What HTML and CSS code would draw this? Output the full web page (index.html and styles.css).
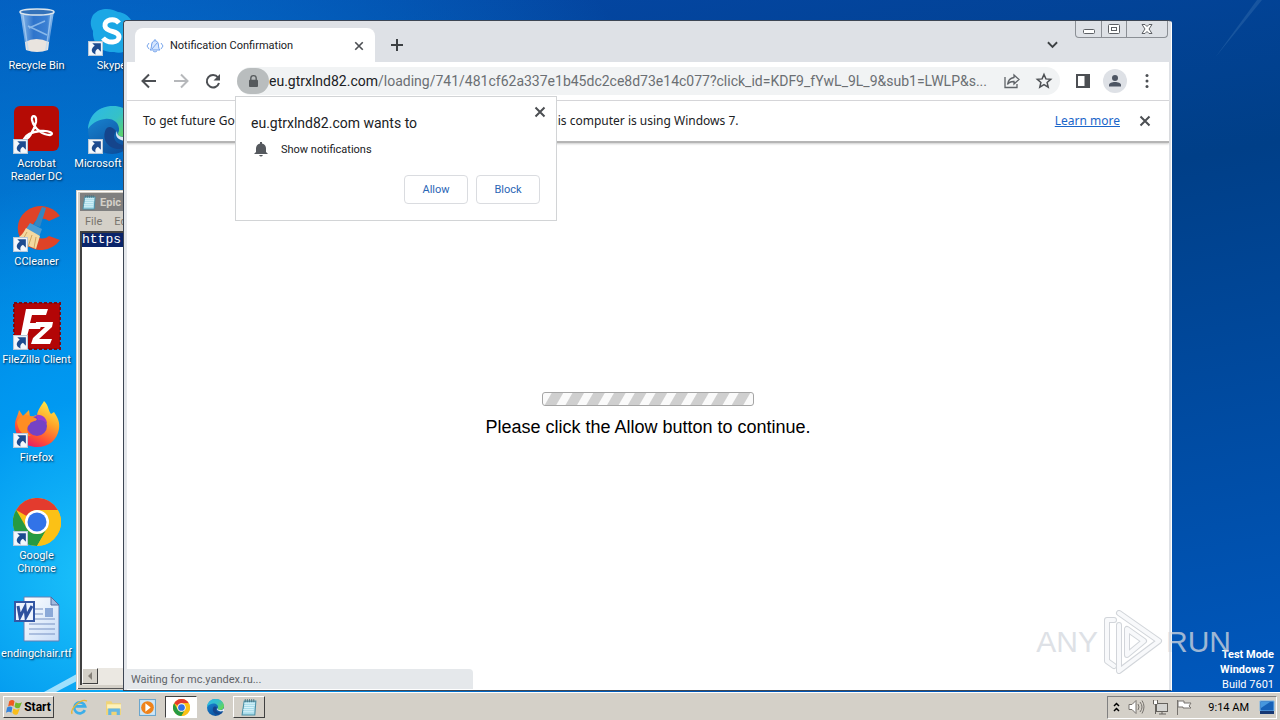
FILE: index.html
```html
<!DOCTYPE html>
<html lang="en">
<head>
<meta charset="utf-8">
<title>Desktop</title>
<link rel="stylesheet" href="styles.css">
</head>
<body>
<svg class="defs" aria-hidden="true">
  <defs>
    <linearGradient id="edgeA" x1="0" y1="0" x2="1" y2="0.6"><stop offset="0" stop-color="#2bb8ea"/><stop offset="0.6" stop-color="#35c1c8"/><stop offset="1" stop-color="#62d65c"/></linearGradient>
    <linearGradient id="edgeB" x1="0" y1="0" x2="0.6" y2="1"><stop offset="0" stop-color="#1b8fdc"/><stop offset="1" stop-color="#0c4f9c"/></linearGradient>
    <linearGradient id="fox" x1="0.8" y1="0" x2="0.3" y2="1"><stop offset="0" stop-color="#fff04a"/><stop offset="0.4" stop-color="#ffa52a"/><stop offset="0.75" stop-color="#ff4f35"/><stop offset="1" stop-color="#e3196b"/></linearGradient>
    <linearGradient id="bin" x1="0" y1="0" x2="1" y2="0"><stop offset="0" stop-color="#a9cdf2"/><stop offset="0.4" stop-color="#3777cc"/><stop offset="0.8" stop-color="#4585d6"/><stop offset="1" stop-color="#b5d8f7"/></linearGradient>
    <linearGradient id="paper" x1="0" y1="0" x2="1" y2="1"><stop offset="0" stop-color="#fff"/><stop offset="1" stop-color="#c7dcf7"/></linearGradient>
    <symbol id="shortcut" viewBox="0 0 14 14"><rect x=".5" y=".5" width="13" height="13" fill="#f4f8fc" stroke="#b8c8d8"/><path d="M4 2h8v8L9.300 7.300C7 8.500 6.500 10 7 12.500 2.500 11 2.500 7 6.300 4.500z" fill="#1d4b8f"/></symbol>
    <symbol id="chrome" viewBox="0 0 48 48"><circle cx="24" cy="24" r="24" fill="#fbc116"/><path d="M3.200 12A24 24 0 0 1 44.800 12H24A12 12 0 0 0 13.600 18z" fill="#e33b2e"/><path d="M3.200 12L13.600 30A12 12 0 0 0 24 36 12 12 0 0 0 34.400 30L24 48A24 24 0 0 1 3.200 12z" fill="#269a42"/><path d="M24 12h20.800A24 24 0 0 1 24 48l10.400-18A12 12 0 0 0 24 12z" fill="#fbc116"/><circle cx="24" cy="24" r="12" fill="#fff"/><circle cx="24" cy="24" r="9.500" fill="#3273e8"/></symbol>
    <symbol id="edge" viewBox="0 0 48 48"><circle cx="24" cy="24" r="24" fill="url(#edgeB)"/><path d="M0 23C1 9 11 0 25 0c14 0 23 10 23 20 0 7-5 11-11 11-7 0-8-3-6-6 1-8-6-13-14-12C9 14 3 18 0 23z" fill="url(#edgeA)"/><path d="M18 23c-5 10 2 20 13 20 6 0 11-3 14-6-6 3-15 3-18-3-2-3-1-6 1-9-4-5-8-5-10-2z" fill="#15458c"/><path d="M29 25c-3 5 1 9 8 10l11-1v-8c-3 4-7 5-11 5-6 0-8-2-8-6z" fill="#fff" opacity=".85"/></symbol>
    <symbol id="notepad" viewBox="0 0 16 16"><path d="M3 2h11l-1 13H1z" fill="#a8dcea" stroke="#4a8fa6"/><path d="M3 4h10M3 6h10M3 8h9M2 10h10M2 12h10" stroke="#e9fbff" stroke-width=".7"/><path d="M4 0v3M6 0v3M8 0v3M10 0v3M12 0v3" stroke="#48717f" stroke-width=".8"/></symbol>
    <symbol id="cross" viewBox="0 0 12 12"><path d="M1.500 1.500l9 9m0-9l-9 9" stroke="currentColor" stroke-width="2"/></symbol>
  </defs>
</svg>
<main class="desktop">
  <svg class="beams" viewBox="0 0 1280 720" preserveAspectRatio="none" aria-hidden="true">
    <path d="M44 720L100 688v8L56 720z" fill="#c4efff" opacity=".8"/>
    <path d="M1215 60L1262 0h-5z" fill="#4d82ba" opacity=".3"/>
  </svg>
  <nav class="icons">
    <a class="icon" href="#bin"><span class="pic"><svg viewBox="0 0 48 48"><path d="M7 3h34l-6 39q-11 4-22 0z" fill="url(#bin)" opacity=".85"/><path d="M12 34q11-6 24 0l-1 8q-11 4-22 0z" fill="#e9e4df"/><path d="M10 7l5 35M38 7l-5 35M16 20l16-7M15 18l19 9" stroke="#b4d8f8" stroke-width="1.500" opacity=".65"/><ellipse cx="24" cy="4" rx="17" ry="3" fill="#3472b9" stroke="#dce6ed" stroke-width="1.500"/></svg></span>Recycle Bin</a>
    <a class="icon" href="#acrobat"><span class="pic"><svg viewBox="0 0 48 48"><rect x="1" width="45" height="45" rx="6" fill="#b50b05"/><path d="M11 33c3 3 10-8 12-17 1-7-5-8-4-2 2 9 11 15 18 15 5-1 0-5-10-4-8 1-14 4-16 8z" fill="none" stroke="#fff" stroke-width="2.300"/></svg><svg class="arrow"><use href="#shortcut"/></svg></span>Acrobat Reader DC</a>
    <a class="icon" href="#ccleaner"><span class="pic"><svg viewBox="0 0 48 48"><path d="M47 12A23 22 0 1 0 47 36l-11-4a10 10 0 1 1 0-15z" fill="#df4327"/><path d="M29 3l4 1-6 19-6-2z" fill="#3487c3"/><path d="M17 19l12 6-3 8-13-8z" fill="#4a9cd4"/><path d="M13 24l14 8-4 13-22-9c6-3 9-6 12-12z" fill="#f4d9a0"/><path d="M14 28l-6 11M19 31l-4 12M23 33l-2 11" stroke="#cda562"/></svg><svg class="arrow"><use href="#shortcut"/></svg></span>CCleaner</a>
    <a class="icon" href="#filezilla"><span class="pic"><svg viewBox="0 0 48 48"><rect x="1" y="1" width="46" height="46" fill="#b30506" stroke="#7e0910" stroke-width="2" stroke-dasharray="3 2"/><path d="M13 7h22l-2 6H19l-2 8h12l-2 6H16l-4 15H6zM23 20h17l-1 5-13 12h13l-2 5H18l2-6 12-11H22z" fill="#fff"/></svg><svg class="arrow"><use href="#shortcut"/></svg></span>FileZilla Client</a>
    <a class="icon" href="#firefox"><span class="pic"><svg viewBox="0 0 48 48"><path d="M6 10l4 6 6-6 1 7 7-2C25 9 29 5 31 1c5 5 4 9 7 13l3-2c4 6 6 10 5 17C44 40 36 47 24 47S2 38 2 25C2 19 5 16 6 10z" fill="url(#fox)"/><circle cx="24" cy="26" r="10" fill="#7542c5"/><path d="M4 22c3-9 12-8 20-3-1 3-7 2-7 5-4 3-4 9 1 12C9 36 5 30 4 22z" fill="#ff8d22"/><path d="M23 15c6-1 11 3 11 9-3-4-5-4-9-4z" fill="#9a3dcc"/></svg><svg class="arrow"><use href="#shortcut"/></svg></span>Firefox</a>
    <a class="icon" href="#chrome-app"><span class="pic"><svg><use href="#chrome"/></svg><svg class="arrow"><use href="#shortcut"/></svg></span>Google Chrome</a>
    <a class="icon" href="#document"><span class="pic"><svg viewBox="0 0 48 48"><path d="M11 1h27l8 8v36H11z" fill="url(#paper)" stroke="#6680b4"/><path d="M38 1v8h8z" fill="#a1b9dd" stroke="#526c9f"/><path d="M16 13h14M16 18h14M16 23h26M16 28h26M16 33h26M16 38h26" stroke="#7791c3"/><rect x="32" y="12" width="8" height="9" fill="#8ba9d8"/><rect x="2" y="6" width="19" height="19" fill="#edf3ff" stroke="#3457a4" stroke-width="2"/><path d="M5 10l2 11 5-10 1 10 6-11" fill="none" stroke="#2d509e" stroke-width="3"/></svg></span>endingchair.rtf</a>
    <a class="icon" href="#skype"><span class="pic"><svg viewBox="0 0 48 48"><path d="M5 7C13-2 25 1 30 4c12 1 19 14 15 24 1 12-9 19-19 16C12 45 4 34 5 23 2 18 2 12 5 7z" fill="#1ba7e5"/><path d="M31 15C26 9 16 12 17 18c1 7 14 4 14 11 0 6-11 7-16 1" fill="none" stroke="#fff" stroke-width="5"/></svg><svg class="arrow"><use href="#shortcut"/></svg></span>Skype</a>
    <a class="icon" href="#edge-app"><span class="pic"><svg><use href="#edge"/></svg><svg class="arrow"><use href="#shortcut"/></svg></span>Microsoft Edge</a>
  </nav>

  <section class="notepad" aria-label="Notepad">
    <header class="np-title"><svg><use href="#notepad"/></svg>Epic</header>
    <div class="np-menu"><span>File</span><span>Edit</span></div>
    <div class="np-body"><span class="selected">https</span></div>
    <div class="np-scroll"><button type="button" aria-label="Scroll left"><svg viewBox="0 0 8 8"><path d="M6 0v8L2 4z" fill="#858078"/></svg></button></div>
  </section>

  <section class="browser" aria-label="Browser">
    <header class="tabstrip">
      <div class="tab">
        <svg class="fav" viewBox="0 0 16 16"><path d="M3 12c2-2 1-4 2-7 1-3 5-3 6 0 1 3 0 5 2 7z" fill="#d5e6ff" stroke="#6d9eeb"/><path d="M6 13q2 2 4 0M8 1v2M2 5L0 8l2 3M14 5l2 3-2 3M5 11l5-6" fill="none" stroke="#78a6ec"/></svg>
        <span class="tab-name">Notification Confirmation</span>
        <button type="button" aria-label="Close tab"><svg class="x small"><use href="#cross"/></svg></button>
      </div>
      <button class="newtab" type="button" aria-label="New tab"><svg viewBox="0 0 12 12"><path d="M6 0v12M0 6h12" stroke="#3c4043" stroke-width="2"/></svg></button>
      <button class="tabsearch" type="button" aria-label="Search tabs"><svg viewBox="0 0 12 8"><path d="M1 1l5 5 5-5" fill="none" stroke="#3c4043" stroke-width="2"/></svg></button>
      <div class="caption">
        <button type="button" aria-label="Minimize"><svg viewBox="0 0 14 12"><rect x="1.500" y="6.500" width="11" height="4" rx="1" fill="#fff" stroke="#5d6065"/></svg></button>
        <button type="button" aria-label="Restore"><svg viewBox="0 0 14 12"><rect x="1.500" y="1.500" width="11" height="9" rx="1" fill="#fff" stroke="#5d6065"/><rect x="4.500" y="4.500" width="5" height="3" fill="none" stroke="#5d6065"/></svg></button>
        <button class="wide" type="button" aria-label="Close"><svg viewBox="0 0 14 12"><path d="M2 1.500h3l2 2 2-2h3L9 6l3 4.500H9l-2-2-2 2H2L5 6z" fill="#fff" stroke="#5d6065"/></svg></button>
      </div>
    </header>
    <div class="toolbar">
      <button type="button" aria-label="Back"><svg viewBox="0 0 16 16"><path d="M15 8H2M8 1.500L1.500 8 8 14.500" fill="none" stroke="#4c4f53" stroke-width="2"/></svg></button>
      <button type="button" aria-label="Forward"><svg viewBox="0 0 16 16"><path d="M1 8h13M8 1.500L14.500 8 8 14.500" fill="none" stroke="#b6b8bb" stroke-width="2"/></svg></button>
      <button type="button" aria-label="Reload"><svg viewBox="0 0 16 16"><path d="M13 4.500A6.200 6.200 0 1 0 14 10" fill="none" stroke="#4c4f53" stroke-width="2"/><path d="M15 1v6.500H8.500z" fill="#4c4f53"/></svg></button>
      <div class="omnibox">
        <button class="lock" type="button" aria-label="Site information"><svg viewBox="0 0 10 14"><rect y="5" width="10" height="8" rx="1" fill="#55595c"/><path d="M2 6V3.500a3 3 0 0 1 6 0V6" fill="none" stroke="#55595c" stroke-width="1.500"/></svg></button>
        <label for="address">eu.gtrxlnd82.com</label>
        <input id="address" type="text" value="/loading/741/481cf62a337e1b45dc2ce8d73e14c077?click_id=KDF9_fYwL_9L_9&amp;sub1=LWLP&amp;s...">
        <button type="button" aria-label="Share"><svg viewBox="0 0 16 16"><path d="M1 4v10.500h12V11" fill="none" stroke="#5f6368" stroke-width="1.300"/><path d="M10 2l5 4.500-5 4.500V8.500C7 8.400 5 9 3.500 11.500 4 7.500 6 5 10 4.500z" fill="none" stroke="#5f6368" stroke-width="1.300"/></svg></button>
        <button type="button" aria-label="Bookmark"><svg viewBox="0 0 16 16"><path d="M8 1.500l1.900 4.400 4.800.4-3.600 3.200 1.100 4.700L8 11.700l-4.200 2.500 1.100-4.700L1.300 6.300l4.800-.4z" fill="none" stroke="#4c4f53" stroke-width="1.500"/></svg></button>
      </div>
      <button type="button" aria-label="Side panel"><svg viewBox="0 0 16 16"><path d="M1 1h14v14H1zM3 3v10h6.500V3z" fill="#4c4f53" fill-rule="evenodd"/></svg></button>
      <button class="avatar" type="button" aria-label="Profile"><svg viewBox="0 0 16 16"><circle cx="8" cy="5" r="3" fill="#4d5563"/><path d="M2 13.500V12c0-4 12-4 12 0v1.500z" fill="#4d5563"/></svg></button>
      <button type="button" aria-label="Menu"><svg viewBox="0 0 16 16"><g fill="#4c4f53"><circle cx="8" cy="2.500" r="1.500"/><circle cx="8" cy="8" r="1.500"/><circle cx="8" cy="13.500" r="1.500"/></g></svg></button>
    </div>
    <div class="infobar">
      <p>To get future Google Chrome updates, you'll need Windows 10 or later. This computer is using Windows 7.</p>
      <a href="#more">Learn more</a>
      <button type="button" aria-label="Dismiss"><svg class="x"><use href="#cross"/></svg></button>
    </div>
    <div class="page">
      <div class="progress" role="progressbar" aria-label="Loading"></div>
      <p>Please click the Allow button to continue.</p>
    </div>
    <div class="status">Waiting for mc.yandex.ru...</div>
    <div class="bubble" role="dialog" aria-labelledby="ask">
      <header><h1 id="ask">eu.gtrxlnd82.com wants to</h1><button type="button" aria-label="Close"><svg class="x"><use href="#cross"/></svg></button></header>
      <p><svg viewBox="0 0 14 16"><path d="M6 1h2v1.500c3 .5 4 3 4 5V11l2 2H0l2-2V7.500c0-2 1-4.500 4-5zM5 14h4q-2 3-4 0z" fill="#55595e"/></svg>Show notifications</p>
      <div class="choices"><button type="button">Allow</button><button type="button">Block</button></div>
    </div>
  </section>

  <div class="build"><b>Test Mode</b><b>Windows 7</b><span>Build 7601</span></div>
  <div class="watermark"><span>ANY</span><svg viewBox="0 0 60 66"><g fill="none" stroke-linejoin="round" stroke-linecap="round"><path d="M17 4l40 28-40 30V16M25 20v26l17-14zM12 11H5v41l7 5" stroke="#c3c8ce" stroke-width="6"/><path d="M17 4l40 28-40 30V16M25 20v26l17-14zM12 11H5v41l7 5" stroke="#f6f8fa" stroke-width="4"/></g></svg><span>RUN</span></div>
</main>
<footer class="taskbar">
  <button class="start" type="button"><svg viewBox="0 0 16 16"><path d="M3 2q3-2 5 0L7 7Q5 5 2 7z" fill="#ef5b22"/><path d="M9 3q3 2 6 0l-2 5q-3 2-5-1z" fill="#74b72c"/><path d="M1 8q3-2 5 0l-1 5q-2-2-5 0z" fill="#3484dc"/><path d="M7 9q3 2 6 0l-2 5q-3 2-5-1z" fill="#f9bd1a"/></svg>Start</button>
  <button type="button" aria-label="Internet Explorer"><svg viewBox="0 0 16 16"><path d="M13 10.500A5.200 5.200 0 1 1 13.300 7H4" fill="none" stroke="#3caee9" stroke-width="2.500"/><path d="M1 14C-1 9 10-1 15 2" fill="none" stroke="#eab52f" stroke-width="1.300"/></svg></button>
  <button type="button" aria-label="Explorer"><svg viewBox="0 0 16 16"><path d="M1 2h5l1 2h8v11H1z" fill="#f0d477"/><path d="M2 5h13v4H2z" fill="#fff2b9"/><path d="M3 15V9h11v6h-3v-3H6v3z" fill="#65b7e4"/></svg></button>
  <button type="button" aria-label="Media Player"><svg viewBox="0 0 16 16"><rect x=".5" y=".5" width="15" height="15" fill="#cde6f8" stroke="#6ba6cd"/><circle cx="8" cy="8" r="6" fill="#ef831b"/><path d="M6 4v8l5-4z" fill="#fff"/></svg></button>
  <button class="pressed" type="button" aria-label="Chrome"><svg><use href="#chrome"/></svg></button>
  <button type="button" aria-label="Edge"><svg><use href="#edge"/></svg></button>
  <button class="raised" type="button" aria-label="Notepad"><svg><use href="#notepad"/></svg></button>
  <div class="tray">
    <svg class="chev" viewBox="0 0 7 10"><path d="M1 4l2.500-2.500L6 4M1 9l2.500-2.500L6 9" fill="none" stroke="#000" stroke-width="1.500"/></svg>
    <svg viewBox="0 0 16 16"><path d="M1 5.500h3l4-4v13l-4-4H1z" fill="#fff" stroke="#77736e"/><path d="M10 5q2 3 0 6M12 3q4 5 0 10M14 1.500q4 6 0 13" fill="none" stroke="#77736e"/></svg>
    <svg viewBox="0 0 16 16"><rect x="4.500" y="4.500" width="11" height="8" fill="#d5d5d2" stroke="#66635e"/><path d="M7 15h7M10 13v2M1.500 1v4h4V1M3.500 5v10" fill="none" stroke="#66635e"/><path d="M2 2h3v3H2z" fill="#fff"/></svg>
    <svg viewBox="0 0 16 16"><path d="M1.500 1v15M2 2h6v2h7l-2 3 2 2H7V8H2z" fill="#fff" stroke="#77736e"/></svg>
    <time>9:14 AM</time>
    <svg viewBox="0 0 16 16"><path d="M1 2h14v10H1z" fill="#1661b8" stroke="#77b5e8"/><path d="M1 12h14v3H1z" fill="#163873"/><path d="M2 3h9L2 9z" fill="#4697de"/></svg>
  </div>
</footer>
</body>
</html>
```
FILE: styles.css
```css
* { box-sizing: border-box; }
html, body { height: 100%; margin: 0; }
body { display: flex; flex-direction: column; overflow: hidden; font: 11px/13px Roboto, "Noto Sans", sans-serif; color: #202124; }
button { font: inherit; color: inherit; border: 0; padding: 0; margin: 0; background: none; display: grid; place-items: center; }
p, h1 { margin: 0; font-weight: normal; }
svg { display: block; overflow: visible; }
.defs { position: absolute; width: 0; height: 0; }

.desktop { position: relative; flex: 1; overflow: hidden; background: radial-gradient(circle 400px at 100px 580px, #1cc3fb, rgba(0, 155, 242, .85) 45%, transparent), radial-gradient(circle 680px at 80px 440px, #0092f2, transparent), linear-gradient(170deg, #0548aa 0, #003f88 40%, #0058bd 100%); }
.beams { position: absolute; inset: 0; width: 100%; height: 100%; }
.icons { position: relative; display: grid; grid-auto-flow: column; grid-template-rows: repeat(7, 98px); grid-auto-columns: 72px; column-gap: 3px; padding-top: 8px; width: max-content; }
.icon { display: flex; flex-direction: column; align-items: center; gap: 3px; color: #fff; text-align: center; text-decoration: none; text-shadow: 1px 1px 2px #024; padding-left: 1px; }
.icon:nth-child(4), .icon:nth-child(7), .icon:nth-child(9) { white-space: nowrap; }
.pic { position: relative; width: 48px; height: 48px; flex: none; }
.pic svg { width: 48px; height: 48px; }
.pic .arrow { position: absolute; left: 0; bottom: 0; width: 15px; height: 15px; }

.notepad { position: absolute; left: 76px; top: 190px; bottom: 2px; width: 400px; display: flex; flex-direction: column; background: #d4d0c8; border: 1px solid #d4d0c8; box-shadow: inset 1px 1px #fff, inset 0 -1px #555; padding: 2px 3px 4px; color: #77736c; }
.np-title { display: flex; align-items: center; gap: 3px; height: 18px; padding-left: 2px; background: #808080; color: #d4d0c8; font-weight: bold; }
.np-title svg { width: 15px; height: 15px; }
.np-menu { display: flex; gap: 12px; padding: 4px 5px; height: 20px; }
.np-body { flex: 1; background: #fff; border: solid #404040; border-width: 2px 0 0 2px; font: 13px/14px "Liberation Mono", monospace; }
.selected { display: inline-block; background: #0a246a; color: #fff; width: 300px; }
.np-scroll { height: 17px; background: #ebe8e2; border-left: 2px solid #404040; }
.np-scroll button { width: 16px; height: 16px; background: #d4d0c8; border: 1px solid; border-color: #fff #404040 #404040 #fff; }
.np-scroll svg { width: 8px; height: 8px; }

.browser { position: absolute; left: 123px; right: 108px; top: 20px; bottom: 1px; display: flex; flex-direction: column; background: #fff; border: 1px solid #3d4654; border-right-color: #fff; border-radius: 4px 4px 0 0; box-shadow: inset 3px 0 #e4e7eb, inset -2px 0 #dee1e6; padding: 0 2px 1px 3px; }
.tabstrip { display: flex; align-items: flex-end; height: 41px; margin: 0 -2px 0 -3px; padding-left: 11px; background: #dee1e6; border-radius: 4px 4px 0 0; }
.tab { display: flex; align-items: center; width: 240px; height: 34px; padding: 1px 9px 0 12px; background: #fff; border-radius: 8px 8px 0 0; }
.fav { width: 16px; height: 16px; margin-right: 7px; }
.tab-name { flex: 1; }
.x { width: 12px; height: 12px; color: #4c4f53; }
.x.small { width: 10px; height: 10px; margin-right: 2px; }
.newtab, .tabsearch { width: 28px; height: 34px; margin-left: 8px; }
.newtab svg { width: 12px; height: 12px; }
.tabsearch { margin-left: auto; margin-right: 9px; }
.tabsearch svg { width: 11px; height: 8px; }
.caption { align-self: flex-start; display: flex; height: 17px; margin-right: 3px; border: solid #8b8f95; border-width: 0 1px 1px; border-radius: 0 0 4px 4px; }
.caption button { width: 25px; }
.caption button + button { border-left: 1px solid #8b8f95; }
.caption .wide { width: 41px; }
.caption svg { width: 14px; height: 12px; }
.toolbar { display: flex; align-items: center; height: 39px; padding: 0 6px; border-bottom: 1px solid #d5d6d9; }
.toolbar button { width: 32px; height: 28px; flex: none; }
.toolbar svg { width: 16px; height: 16px; }
.omnibox { flex: 1; min-width: 0; display: flex; align-items: center; height: 28px; margin: 0 7px 0 8px; background: #f1f3f4; border-radius: 14px; font-size: 14px; line-height: 18px; }
.omnibox .lock { height: 26px; background: #b9bdbe; border-radius: 13px; }
.omnibox .lock svg { width: 9px; height: 13px; }
.omnibox input { flex: 1; min-width: 0; font: inherit; color: #6b6f73; background: none; border: 0; padding: 0; }
.toolbar .avatar { width: 24px; height: 24px; margin: 0 4px; background: #dee1e6; border-radius: 12px; }
.infobar { display: flex; align-items: center; height: 42px; padding: 0 18px 0 16px; border-bottom: 2px solid #b5b5b5; box-shadow: 0 1px 2px #ccc; font: 12px/18px "Noto Sans", sans-serif; }
.infobar p { flex: 1; white-space: nowrap; }
.infobar a { color: #1a66c9; margin-right: 19px; }
.page { flex: 1; display: flex; flex-direction: column; align-items: center; justify-content: center; gap: 10px; padding-bottom: 2px; font: 18px/22px "Liberation Sans", Arial, sans-serif; color: #000; }
.progress { width: 212px; height: 14px; border: 1px solid #a5a5a5; border-radius: 3px; background: repeating-linear-gradient(120deg, #fafafa 0 7px, #cfcfcf 8px 17px, #fafafa 18px); }
.status { position: absolute; left: 3px; bottom: 1px; width: 346px; height: 20px; padding: 4px; background: #e5e8eb; color: #5f6368; border-radius: 0 4px 0 0; }
.bubble { position: absolute; left: 111px; top: 75px; width: 322px; min-height: 125px; padding: 9px 16px 16px 15px; display: flex; flex-direction: column; background: #fff; border: 1px solid #d2d4d6; }
.bubble header { display: flex; justify-content: space-between; align-items: flex-start; margin-right: -6px; }
.bubble h1 { font-size: 14px; line-height: 18px; padding-top: 8px; }
.bubble header button { width: 12px; height: 12px; }
.bubble p { display: flex; align-items: center; gap: 13px; padding: 9px 3px 18px; }
.bubble p svg { width: 14px; height: 16px; }
.choices { display: flex; justify-content: flex-end; gap: 8px; }
.choices button { width: 64px; height: 29px; border: 1px solid #dadce0; border-radius: 4px; color: #2a65b5; }

.build { position: absolute; right: 6px; bottom: 0; display: flex; flex-direction: column; align-items: flex-end; color: #fff; line-height: 15px; }
.watermark { position: absolute; right: 49px; bottom: 17px; display: flex; align-items: center; gap: 4px; font: 30px/66px "Liberation Sans", sans-serif; color: #d3d8de; opacity: .75; }
.watermark svg { width: 60px; height: 66px; }

.taskbar { display: flex; align-items: center; gap: 2px; height: 28px; padding: 1px 3px 0; background: #d4d0c8; border-top: 1px solid #fff; }
.taskbar button { width: 32px; height: 22px; }
.taskbar svg { width: 17px; height: 17px; }
.taskbar .start { width: 51px; margin-right: 7px; display: flex; align-items: center; justify-content: center; gap: 1px; color: #000; font-size: 12px; font-weight: bold; }
.start, .taskbar .raised { border: 1px solid; border-color: #fff #404040 #404040 #fff; }
.taskbar .pressed { background: #fff; border: 1px solid; border-color: #404040 #fff #fff #404040; }
.tray { display: flex; align-items: center; gap: 8px; height: 23px; margin-left: auto; padding: 0 1px 0 5px; border: 1px solid; border-color: #808080 #fff #fff #808080; color: #000; }
.tray svg { width: 16px; height: 16px; }
.tray .chev { width: 7px; height: 10px; }
.tray time { padding: 0 2px 0 8px; }
```
